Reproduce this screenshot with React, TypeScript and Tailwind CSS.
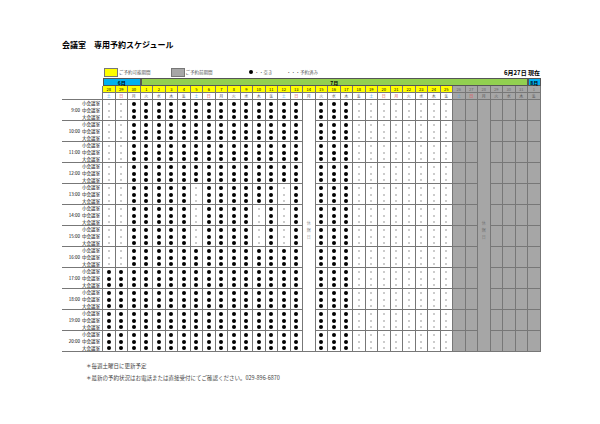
import React from "react";

const days = [28, 29, 30, ...Array.from({ length: 31 }, (_, i) => i + 1), 1];
const wk = ["土", "日", "月", "火", "水", "木", "金"];
const slots = ["9:00", "10:00", "11:00", "12:00", "13:00", "14:00", "15:00", "16:00", "17:00", "18:00", "19:00", "20:00"];
const rooms = ["小会議室", "中会議室", "大会議室"];

function kind(c: number, s: number): "big" | "small" | "none" {
  if (c === 16 || c >= 28) return "none";
  if (c >= 20) return "small";
  if (c <= 1) return s <= 7 ? "small" : "big";
  if (s === 4 && (c === 7 || c === 14)) return "small";
  if ((s === 5 || s === 6) && (c === 7 || c === 12 || c === 14)) return "small";
  return "big";
}

const grid = "grid grid-cols-[41px_repeat(35,12.5px)]";

export default function App() {
  const rows: React.ReactNode[] = [];
  for (let s = 0; s < 12; s++) {
    for (let r = 0; r < 3; r++) {
      const ri = s * 3 + r;
      const last = r === 2;
      rows.push(
        <div key={`l${ri}`} className={`h-[7px] flex items-center justify-end pr-[2px] text-[4.5px] leading-none ${last ? "border-b border-[#777]" : ""} border-r border-[#777]`}>
          {r === 1 && <span className="mr-[2px]">{slots[s]}</span>}
          <span>{rooms[r]}</span>
        </div>
      );
      for (let c = 0; c < 35; c++) {
        const k = kind(c, s);
        const grey = c >= 28;
        const special = c === 16 || c === 30;
        const txt = special && ri >= 17 && ri <= 19 ? "休館日"[ri - 17] : "";
        rows.push(
          <div
            key={`${ri}-${c}`}
            className={`h-[7px] flex items-center justify-center border-r border-[#777] ${last && !special ? "border-b" : ""} ${grey ? "bg-[#a6a6a6]" : "bg-white"} ${last && special && s === 11 ? "border-b" : ""}`}
          >
            {k === "big" && <div className="w-[4px] h-[4px] rounded-full bg-black" />}
            {k === "small" && <div className="w-[2px] h-[2px] rounded-full bg-[#bbb]" />}
            {txt && <span className={`text-[4px] leading-none ${grey ? "text-[#777]" : "text-[#999]"}`}>{txt}</span>}
          </div>
        );
      }
    }
  }

  return (
    <div className="w-[600px] h-[424px] bg-white relative pl-[62px] pt-[41px] text-black" style={{ fontFamily: '"Noto Sans CJK JP", "Noto Sans", sans-serif' }}>
      <div className="text-[8px] font-bold leading-none">会議室　専用予約スケジュール</div>
      <div className="flex items-center mt-[18px] h-[10px] text-[4.5px] text-[#555]">
        <div className="ml-[42px] w-[14px] h-[9px] bg-[#ffff00] border border-[#777]" />
        <span className="ml-[1px]">ご予約可能期間</span>
        <div className="ml-[20px] w-[14px] h-[9px] bg-[#a6a6a6] border border-[#777]" />
        <span className="ml-[1px]">ご予約前期間</span>
        <span className="ml-[36px] flex items-center"><span className="w-[4px] h-[4px] rounded-full bg-black inline-block mr-[2px]" />・・空き</span>
        <span className="ml-[14px]">・・・予約済み</span>
        <span className="ml-auto mr-[60px] text-[6px] font-bold text-black">6月27日 現在</span>
      </div>
      <div className="mt-[1px]">
        <div className={`${grid} h-[8px] text-[5px] font-bold leading-none`}>
          <div />
          <div className="col-span-3 bg-[#00b0f0] border border-[#555] flex items-center justify-center">6月</div>
          <div className="col-span-31 bg-[#92d050] border border-[#555] flex items-center justify-center">7月</div>
          <div className="bg-[#00b0f0] border border-[#555] flex items-center justify-center">8月</div>
        </div>
        <div className={`${grid} h-[7px] text-[4px] leading-none`}>
          <div className="border-r border-[#777]" />
          {days.map((d, c) => (
            <div key={c} className={`flex items-center justify-center border-r border-b border-[#777] ${c >= 28 ? "bg-[#a6a6a6] text-[#666]" : "bg-[#ffff00]"}`}>{d}</div>
          ))}
        </div>
        <div className={`${grid} h-[7px] text-[4px] leading-none`}>
          <div className="border-r border-b border-[#777]" />
          {days.map((_, c) => {
            const w = wk[c % 7];
            const col = w === "土" ? "text-[#4aa3df]" : w === "日" || c === 23 ? "text-[#e05050]" : "text-[#555]";
            return (
              <div key={c} className={`flex items-center justify-center border-r border-b border-[#777] ${col} ${c >= 28 ? "bg-[#a6a6a6]" : "bg-white"}`}>{w}</div>
            );
          })}
        </div>
        <div className={grid}>{rows}</div>
      </div>
      <div className="mt-[8px] ml-[24px] text-[5.5px] text-[#444] leading-[12px]">
        <div>＊毎週土曜日に更新予定</div>
        <div>＊最新の予約状況はお電話または直接受付にてご確認ください。029-896-6870</div>
      </div>
    </div>
  );
}
